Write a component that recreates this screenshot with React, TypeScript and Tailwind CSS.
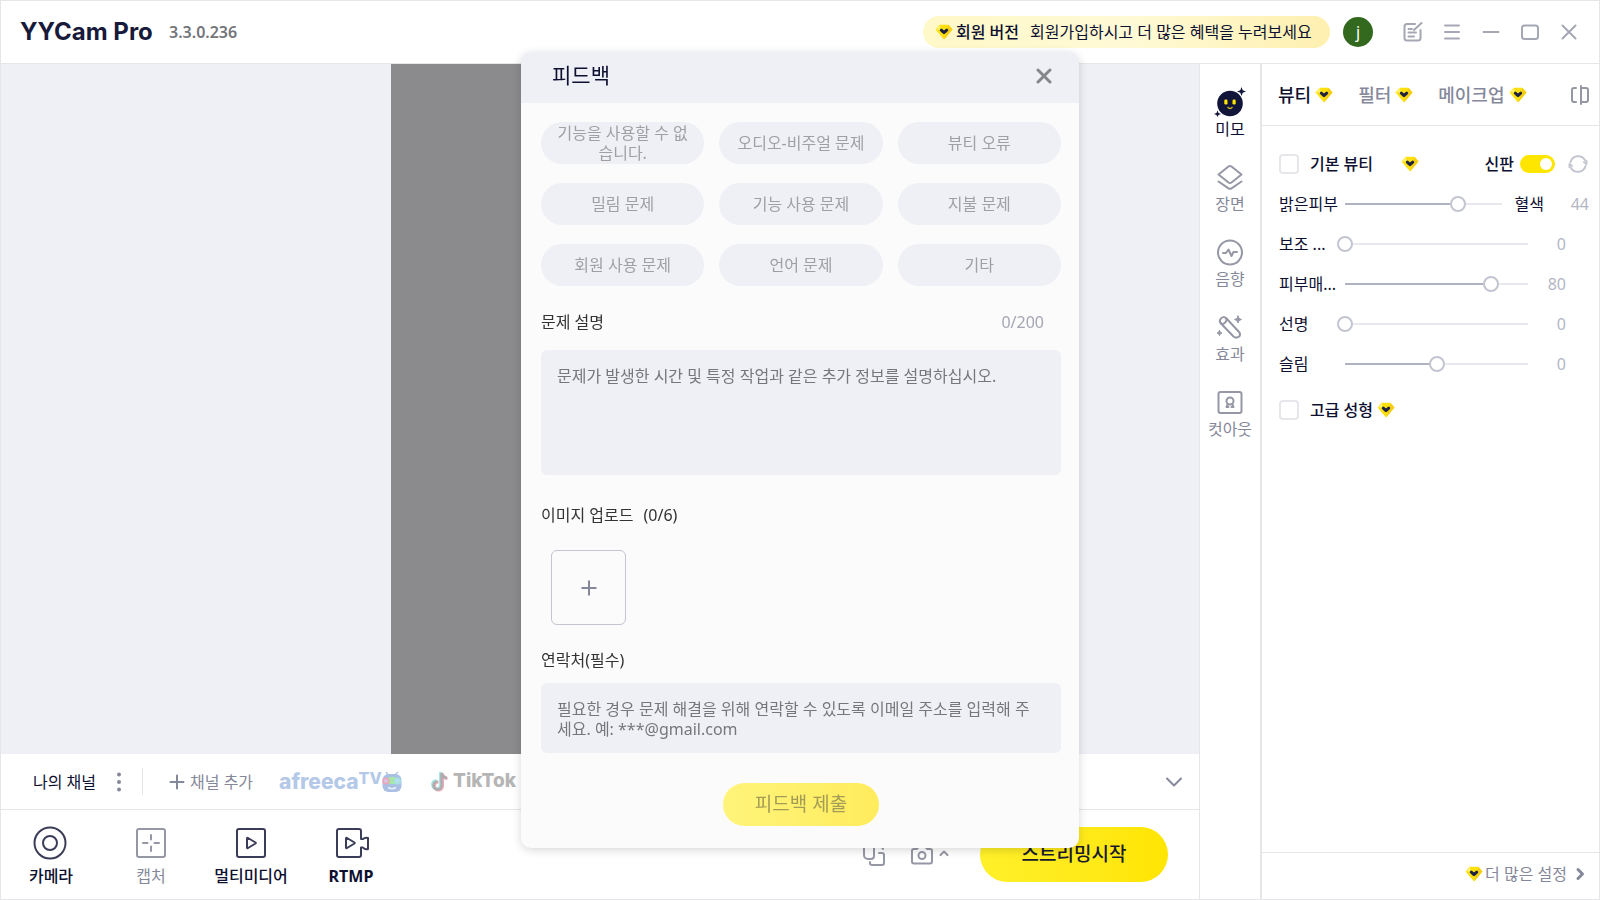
import { useState } from "react";
import type { ReactNode } from "react";

const TABS = ["뷰티", "필터", "메이크업"];

const FEEDBACK_TYPES = [
  "기능을 사용할 수 없습니다.",
  "오디오-비주얼 문제",
  "뷰티 오류",
  "밀림 문제",
  "기능 사용 문제",
  "지불 문제",
  "회원 사용 문제",
  "언어 문제",
  "기타",
];

const SLIDERS = [
  { label: "보조 ...", position: 0, value: 0 },
  { label: "피부매...", position: 80, value: 80 },
  { label: "선명", position: 0, value: 0 },
  { label: "슬림", position: 50, value: 0 },
];

function Gem() {
  return (
    <svg width="18" height="16" viewBox="0 0 18 16" className="shrink-0" aria-hidden="true">
      <path d="M4.6 0.8H13.4L17.5 5.6L9 15.6L0.5 5.6Z" fill="#fee011" />
      <path d="M4.6 0.8L6 5.6H0.5Z" fill="#fff06a" />
      <path d="M13.4 0.8L17.5 5.6L9 15.6L12.5 6Z" fill="#f5cd12" />
      <path d="M6.3 6.2L9 8.6L11.7 6.2" fill="none" stroke="#1d2340" strokeWidth="3" strokeLinecap="round" strokeLinejoin="round" />
    </svg>
  );
}

function Icon({
  size = 24,
  width = 2,
  box = 24,
  children,
}: {
  size?: number;
  width?: number;
  box?: number;
  children: ReactNode;
}) {
  return (
    <svg
      width={size}
      height={size}
      viewBox={`0 0 ${box} ${box}`}
      fill="none"
      stroke="currentColor"
      strokeWidth={width}
      strokeLinecap="round"
      strokeLinejoin="round"
      className="shrink-0"
      aria-hidden="true"
    >
      {children}
    </svg>
  );
}

function Header() {
  return (
    <header className="flex h-[63px] shrink-0 items-center border-b border-[#e6e6e8] pr-[18px] pl-[19px]">
      <h1 className="w-[131px] font-['Inter',sans-serif] text-2xl font-bold whitespace-nowrap text-[#171a3b]">YYCam Pro</h1>
      <span className="ml-[18px] font-semibold text-[#747579]">3.3.0.236</span>
      <div className="ml-auto flex items-center">
        <button className="flex h-8 w-[407px] items-center rounded-full bg-linear-to-r from-[#fff8c8] via-[#fffad6] to-[#fff0b0] px-3">
          <Gem />
          <span className="ml-[3px] font-medium">회원 버전</span>
          <span className="ml-[11px]">회원가입하시고 더 많은 혜택을 누려보세요</span>
        </button>
        <span className="ml-[13px] flex size-[30px] items-center justify-center rounded-full bg-[#32691e] text-white">j</span>
        <div className="ml-7 flex gap-[15px] text-[#a5a7b4]">
          <button aria-label="피드백">
            <Icon>
              <path d="M14 4H6A2.500 2.500 0 0 0 3.500 6.500V18A2.500 2.500 0 0 0 6 20.500H17A2.500 2.500 0 0 0 19.500 18V10" />
              <path d="M13 10L20.500 3M7.500 9H11M7.500 12.500H15M7.500 16.500H13" />
            </Icon>
          </button>
          <button aria-label="메뉴">
            <Icon>
              <path d="M5 5.500H19M5 12H19M5 18.500H19" />
            </Icon>
          </button>
          <button aria-label="최소화">
            <Icon>
              <path d="M4.500 12H19.500" />
            </Icon>
          </button>
          <button aria-label="최대화">
            <Icon>
              <rect x="4" y="5.500" width="16" height="13.500" rx="2.500" />
            </Icon>
          </button>
          <button aria-label="닫기">
            <Icon>
              <path d="M5.500 5.500L18.500 18.500M18.500 5.500L5.500 18.500" />
            </Icon>
          </button>
        </div>
      </div>
    </header>
  );
}

function ChannelBar() {
  return (
    <div className="flex h-14 shrink-0 items-center border-b border-[#e6e6e8] pr-4 pl-8 whitespace-nowrap">
      <span>나의 채널</span>
      <button className="ml-[13px] text-[#85889a]" aria-label="채널 메뉴">
        <svg width="20" height="20" viewBox="0 0 20 20" fill="currentColor" aria-hidden="true">
          <circle cx="10" cy="2.500" r="2" />
          <circle cx="10" cy="10" r="2" />
          <circle cx="10" cy="17.500" r="2" />
        </svg>
      </button>
      <span className="ml-[13px] h-[27px] w-px bg-[#e6e6e8]" />
      <button className="ml-[25px] flex items-center gap-1 text-[#85889a]">
        <Icon size={18} box={18}>
          <path d="M9 2.500V15.500M2.500 9H15.500" />
        </Icon>
        채널 추가
      </button>
      <a href="#afreeca" className="ml-[26px] flex w-[122px] items-center font-['Inter',sans-serif] font-extrabold text-[#b4c8e8]">
        <span className="text-[21px] leading-6">afreeca</span>
        <span className="mb-2 text-base leading-4">TV</span>
        <svg width="20" height="22" viewBox="0 0 20 22" className="shrink-0" aria-hidden="true">
          <path d="M6 4L4 1M13 4L16 1" stroke="#b4c8e8" strokeWidth="1.500" />
          <rect x="0.500" y="3" width="19" height="18" rx="6" fill="#a9bfe3" />
          <rect x="6.500" y="6" width="7" height="7" fill="#a8e6a8" />
          <circle cx="4" cy="10" r="2.800" fill="#d8c4e0" stroke="#eda3b8" strokeWidth="1.500" />
          <circle cx="15.500" cy="10" r="2.800" fill="#b9dcee" stroke="#a4e0e4" strokeWidth="1.500" />
          <path d="M6 16.500Q10 19 14 16.500" stroke="#e9f0fa" fill="none" strokeWidth="1.500" />
        </svg>
      </a>
      <a href="#tiktok" className="ml-[29px] flex items-center gap-1 font-['Inter',sans-serif] text-[19px] font-extrabold text-[#b5b5b5]">
        <svg width="19" height="24" viewBox="0 0 19 24" aria-hidden="true">
          <g fill="none" strokeWidth="3">
            <path d="M10.500 2V14.500A4 4 0 1 1 6.500 10.500M10.500 2Q11 7 16 7.500" stroke="#a8e4e4" />
            <path d="M12.500 3.500V16A4 4 0 1 1 8.500 12M12.500 3.500Q13 8 17.500 8.500" stroke="#f2a9ba" />
            <path d="M11.500 3V15.500A4 4 0 1 1 7.500 11.500M11.500 3Q12 7.500 17 8" stroke="#adadad" strokeWidth="2.500" />
          </g>
        </svg>
        TikTok
      </a>
      <button className="ml-auto text-[#85889a]" aria-label="펼치기">
        <Icon size={18} box={18}>
          <path d="M2 5.500L9 12.500L16 5.500" />
        </Icon>
      </button>
    </div>
  );
}

function SourceButton({
  label,
  muted,
  bold,
  children,
}: {
  label: string;
  muted?: boolean;
  bold?: boolean;
  children: ReactNode;
}) {
  return (
    <button
      className={`flex w-20 flex-col items-center gap-[3px] leading-6 ${muted ? "text-[#9597a5]" : "text-[#3b3d58]"} ${
        bold ? "font-bold" : muted ? "font-normal" : "font-medium"
      }`}
    >
      <Icon size={36} box={36}>
        {children}
      </Icon>
      <span className={muted ? "text-[#85889a]" : "text-[#0d1031]"}>{label}</span>
    </button>
  );
}

function Toolbar() {
  return (
    <div className="flex h-[89px] shrink-0 items-center justify-between pr-[31px] pl-[10px]">
      <div className="flex gap-5 pt-[3px]">
        <SourceButton label="카메라">
          <circle cx="17" cy="18" r="15.500" />
          <circle cx="17" cy="18" r="7" />
        </SourceButton>
        <SourceButton label="캡처" muted>
          <rect x="4" y="4" width="28" height="28" rx="2" />
          <path d="M18 10V14.500M18 21.500V26M10 18H14.500M21.500 18H26" />
        </SourceButton>
        <SourceButton label="멀티미디어">
          <rect x="4" y="4" width="28" height="28" rx="2" />
          <path d="M14 13.500V22.500Q14 23.500 15 23L22.500 18.500Q23 18 22.500 17.500L15 13Q14 12.500 14 13.500Z" />
        </SourceButton>
        <SourceButton label="RTMP" bold>
          <path d="M28 13V6A2 2 0 0 0 26 4H6A2 2 0 0 0 4 6V30A2 2 0 0 0 6 32H26A2 2 0 0 0 28 30V23" />
          <path d="M28 14H30Q32 12 35 13V24Q32 25 30 22.500H28" />
          <path d="M13 13.500V22.500Q13 23.500 14 23L21.500 18.500Q22 18 21.500 17.500L14 13Q13 12.500 13 13.500Z" />
        </SourceButton>
      </div>
      <div className="flex items-center text-[#9597a5]">
        <button aria-label="화면 전환">
          <Icon>
            <path d="M12 3H4A2 2 0 0 0 2 5V12A4 4 0 0 0 6 16H9A3 3 0 0 0 12 13V3Z" />
            <path d="M17 10H20A2 2 0 0 1 22 12V20A2 2 0 0 1 20 22H10A2 2 0 0 1 8 20V19" />
            <path d="M18 4Q21 4 21 6" />
          </Icon>
        </button>
        <button className="ml-6" aria-label="스크린샷">
          <Icon>
            <path d="M4 6H7L9 3.500H15L17 6H20A2 2 0 0 1 22 8V18.500A2 2 0 0 1 20 20.500H4A2 2 0 0 1 2 18.500V8A2 2 0 0 1 4 6Z" />
            <circle cx="12" cy="12.500" r="3.500" />
          </Icon>
        </button>
        <button className="mb-1 ml-1" aria-label="스크린샷 옵션">
          <Icon size={12} box={12}>
            <path d="M2.500 8L6 4.500L9.500 8" />
          </Icon>
        </button>
        <button className="ml-[30px] h-[55px] w-[188px] rounded-full bg-linear-to-r from-[#fff029] to-[#ffe500] text-[19px] font-medium text-[#171a2c]">
          스트리밍시작
        </button>
      </div>
    </div>
  );
}

function SideItem({ label, active, children }: { label: string; active?: boolean; children: ReactNode }) {
  return (
    <button className="flex w-full flex-col items-center leading-6">
      <span className="text-[#9597a5]">{children}</span>
      <span className={active ? "text-[#0d1031]" : "text-[#85889a]"}>{label}</span>
    </button>
  );
}

function SideNav() {
  return (
    <nav className="flex w-[61px] shrink-0 flex-col gap-[21px] border-l border-[#e6e6e8] pt-[23px]">
      <SideItem label="미모" active>
        <svg width="32" height="30" viewBox="0 0 32 30" aria-hidden="true">
          <circle cx="16" cy="16.500" r="12.800" fill="#12153a" />
          <path d="M27.500 0L28.700 3.300L32 4.500L28.700 5.700L27.500 9L26.300 5.700L23 4.500L26.300 3.300Z" fill="#12153a" />
          <path d="M3.500 23.500L4.500 26L7 27L4.500 28L3.500 30L2.500 28L0 27L2.500 26Z" fill="#12153a" />
          <rect x="10.300" y="12.500" width="3.200" height="5" rx="1.200" fill="#ffe600" />
          <rect x="18.500" y="12.500" width="3.200" height="5" rx="1.200" fill="#ffe600" />
          <path d="M13.500 20Q16 23 18.500 20" fill="none" stroke="#c8b61c" strokeWidth="1.300" />
        </svg>
      </SideItem>
      <SideItem label="장면">
        <Icon size={30} box={30}>
          <path d="M13.500 4.500Q15 3.500 16.500 4.500L26.500 12.500L16.500 20.500Q15 21.500 13.500 20.500L3.500 12.500Z" />
          <path d="M3.500 19.500L13.500 26.300Q15 27.300 16.500 26.300L26.500 19.500" />
        </Icon>
      </SideItem>
      <SideItem label="음향">
        <Icon size={30} box={30}>
          <circle cx="15" cy="15.500" r="12" />
          <path d="M8 16H11L13.500 12.500L16.500 19L18.500 15H22" />
        </Icon>
      </SideItem>
      <SideItem label="효과">
        <Icon size={30} box={30}>
          <path d="M5.500 7Q8 3.500 11.500 6.500L24.500 20.500Q26 23.500 23.500 25Q21 26.500 18.500 24.500L5.500 11Q4 9 5.500 7Z" />
          <path d="M6 11Q7 13 9 11.500Q12.500 9 11 6.500" />
          <g fill="currentColor" strokeWidth="1">
            <path d="M23 4L24 6.500L26.500 7.500L24 8.500L23 11L22 8.500L19.500 7.500L22 6.500Z" />
            <path d="M4.500 18.500L5.300 20.200L7 21L5.300 21.800L4.500 23.500L3.700 21.800L2 21L3.700 20.200Z" />
          </g>
        </Icon>
      </SideItem>
      <SideItem label="컷아웃">
        <Icon size={30} box={30}>
          <rect x="3.500" y="5" width="23" height="21" rx="2" />
          <circle cx="15" cy="14" r="3.500" />
          <path d="M12.800 17L11.500 20M17.200 17L18.500 20M11.500 20H13.500M16.500 20H18.500" />
        </Icon>
      </SideItem>
    </nav>
  );
}

function Slider({ label, position }: { label: string; position: number }) {
  const [value, setValue] = useState(position);
  return (
    <input
      type="range"
      aria-label={label}
      value={value}
      onChange={(e) => setValue(Number(e.target.value))}
      className="-mx-2 h-4 min-w-0 flex-1 appearance-none bg-[length:calc(100%-16px)_2px] bg-center bg-no-repeat [&::-webkit-slider-thumb]:size-4 [&::-webkit-slider-thumb]:appearance-none [&::-webkit-slider-thumb]:rounded-full [&::-webkit-slider-thumb]:border-2 [&::-webkit-slider-thumb]:border-[#c3c5d1] [&::-webkit-slider-thumb]:bg-white"
      style={{ backgroundImage: `linear-gradient(to right, #b0b2c3 ${value}%, #e8e8ed ${value}%)` }}
    />
  );
}

function Checkbox({ id }: { id: string }) {
  return (
    <input
      type="checkbox"
      id={id}
      className="size-5 appearance-none rounded-[4px] border-2 border-[#e6e6eb] bg-white checked:bg-[#ffe600]"
    />
  );
}

function BeautyPanel() {
  const [upgraded, setUpgraded] = useState(true);
  return (
    <aside className="flex w-[339px] shrink-0 flex-col border-l-2 border-[#e6e6e8]">
      <div className="flex h-[62px] shrink-0 items-center gap-[25px] border-b border-[#e6e6e8] pr-[9px] pl-4">
        {TABS.map((tab, i) => (
          <button
            key={tab}
            className={`flex items-center gap-1 text-lg font-medium ${i === 0 ? "text-[#0d1031]" : "text-[#85889a]"}`}
          >
            {tab}
            <Gem />
          </button>
        ))}
        <button className="ml-auto text-[#9597a5]" aria-label="비교">
          <Icon size={20} box={20}>
            <path d="M6 3H4Q2 3 2 5V15Q2 17 4 17H6M11 1V19M11 3H16Q18 3 18 5V15Q18 17 16 17H11" />
          </Icon>
        </button>
      </div>

      <div className="flex-1">
        <div className="mt-[18px] flex h-10 items-center pr-[11px] pl-[17px]">
          <Checkbox id="basic" />
          <label htmlFor="basic" className="ml-[11px] font-medium">
            기본 뷰티
          </label>
          <span className="ml-7">
            <Gem />
          </span>
          <label htmlFor="upgraded" className="ml-auto font-medium">
            신판
          </label>
          <input
            id="upgraded"
            type="checkbox"
            role="switch"
            checked={upgraded}
            onChange={(e) => setUpgraded(e.target.checked)}
            className="ml-[6px] flex h-[18px] w-[35px] appearance-none items-center rounded-full bg-[#d5d6de] px-[3px] before:size-3 before:rounded-full before:bg-white checked:justify-end checked:bg-[#ffe600]"
          />
          <button className="ml-[13px] text-[#c3c5d1]" aria-label="초기화">
            <Icon size={20} box={20}>
              <path d="M2.500 8A8 8 0 0 1 17 6M17.500 12A8 8 0 0 1 3 14M1.500 13V10L4 12M18.500 7V10L16 8" />
            </Icon>
          </button>
        </div>

        <div className="flex h-10 items-center pr-[10px] pl-[17px]">
          <span className="w-[66px]">밝은피부</span>
          <Slider label="밝은피부" position={72} />
          <span className="ml-[13px]">혈색</span>
          <span className="w-[45px] text-right text-[#b4b6c5]">44</span>
        </div>
        {SLIDERS.map(({ label, position, value }) => (
          <div key={label} className="flex h-10 items-center pr-[33px] pl-[17px]">
            <span className="w-[66px]">{label}</span>
            <Slider label={label} position={position} />
            <span className="w-[38px] text-right text-[#b4b6c5]">{value}</span>
          </div>
        ))}

        <div className="mt-[6px] flex h-10 items-center pl-[17px]">
          <Checkbox id="advanced" />
          <label htmlFor="advanced" className="mr-1 ml-[11px] font-medium">
            고급 성형
          </label>
          <Gem />
        </div>
      </div>

      <a
        href="#settings"
        className="flex h-[47px] shrink-0 items-center justify-end border-t border-[#e6e6e8] pr-3 pb-1 text-[#85889a]"
      >
        <Gem />
        <span className="mr-[6px] ml-[2px]">더 많은 설정</span>
        <Icon size={14} box={14} width={3}>
          <path d="M5 2.500L9.500 7L5 11.500" />
        </Icon>
      </a>
    </aside>
  );
}

function FeedbackDialog() {
  const [text, setText] = useState("");
  return (
    <div className="fixed inset-0 z-10 flex items-center justify-center">
      <div
        role="dialog"
        aria-labelledby="feedback-title"
        className="w-[558px] overflow-hidden rounded-[10px] bg-[#fbfbfb] shadow-[0_2px_10px_rgba(0,0,0,0.16)]"
      >
        <div className="flex h-[51px] items-center justify-between bg-[#eff0f6] pr-[26px] pb-1 pl-[31px]">
          <h2 id="feedback-title" className="text-[21px]">
            피드백
          </h2>
          <button className="text-[#85868b]" aria-label="닫기">
            <Icon size={18} box={18} width={3}>
              <path d="M3 3L15 15M15 3L3 15" />
            </Icon>
          </button>
        </div>

        <form className="pr-[18px] pb-[22px] pl-5 text-[#333]">
          <div className="grid grid-cols-3 gap-x-[15px] gap-y-[19px] pt-[19px]">
            {FEEDBACK_TYPES.map((type) => (
              <button
                key={type}
                type="button"
                className="flex h-[42px] items-center justify-center rounded-full bg-[#eff0f6] px-[14px] leading-5 text-[#a0a0a3]"
              >
                {type}
              </button>
            ))}
          </div>

          <div className="mt-6 flex items-center justify-between pr-[17px] leading-6">
            <label htmlFor="description">문제 설명</label>
            <span className="text-[#a5a7b4]">{text.length}/200</span>
          </div>
          <textarea
            id="description"
            value={text}
            maxLength={200}
            onChange={(e) => setText(e.target.value)}
            placeholder="문제가 발생한 시간 및 특정 작업과 같은 추가 정보를 설명하십시오."
            className="mt-4 block h-[125px] w-full resize-none rounded-md bg-[#eff0f6] p-4 leading-5 placeholder:text-[#76777b]"
          />

          <div className="mt-7 flex gap-[10px] leading-6">
            <span>이미지 업로드</span>
            <span>(0/6)</span>
          </div>
          <button
            type="button"
            aria-label="이미지 추가"
            className="mt-[23px] ml-[10px] flex size-[75px] items-center justify-center rounded-md border border-[#c3c5d1] text-[#85889a]"
          >
            <Icon size={18} box={18}>
              <path d="M9 1.500V16.500M1.500 9H16.500" strokeLinecap="butt" />
            </Icon>
          </button>

          <label htmlFor="contact" className="mt-[23px] block leading-6">
            연락처(필수)
          </label>
          <textarea
            id="contact"
            placeholder="필요한 경우 문제 해결을 위해 연락할 수 있도록 이메일 주소를 입력해 주세요. 예: ***@gmail.com"
            className="mt-[11px] block h-[70px] w-full resize-none rounded-md bg-[#eff0f6] py-4 pr-5 pl-4 leading-5 placeholder:text-[#76777b]"
          />

          <button
            type="button"
            className="mx-auto mt-[30px] block h-[43px] w-[156px] rounded-full bg-linear-to-r from-[#fff47a] to-[#ffec5c] text-[19px] text-[#a39c56]"
          >
            피드백 제출
          </button>
        </form>
      </div>
    </div>
  );
}

export default function App() {
  return (
    <div className="flex h-screen flex-col border border-[#e6e6e8] bg-white font-['Noto_Sans','Noto_Sans_CJK_KR',sans-serif] text-base text-[#0d1031]">
      <Header />
      <div className="flex min-h-0 flex-1">
        <main className="flex min-w-0 flex-1 flex-col">
          <div className="flex min-h-0 flex-1 justify-center bg-[#eff0f6]">
            <div className="w-[418px] bg-[#8b8b8d]" />
          </div>
          <ChannelBar />
          <Toolbar />
        </main>
        <SideNav />
        <BeautyPanel />
      </div>
      <FeedbackDialog />
    </div>
  );
}
